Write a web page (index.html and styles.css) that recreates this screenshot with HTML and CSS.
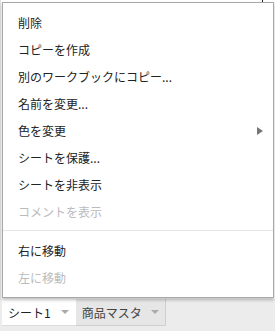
FILE: index.html
```html
<!DOCTYPE html>
<html lang="ja">
<head>
    <meta charset="UTF-8">
    <title>シートメニュー</title>
    <link rel="stylesheet" href="styles.css">
</head>
<body>
    <div class="sheet-area">
        <span class="col-mark"></span>
    </div>

    <div class="tab-bar">
        <div class="tab active">シート1 <span class="tab-arrow"></span></div>
        <div class="tab">商品マスタ <span class="tab-arrow"></span></div>
    </div>

    <!-- context menu for the sheet tab -->
    <div class="menu">
        <div class="menu-item">削除</div>
        <div class="menu-item">コピーを作成</div>
        <div class="menu-item">別のワークブックにコピー...</div>
        <div class="menu-item">名前を変更...</div>
        <div class="menu-item has-sub">色を変更 <span class="sub-arrow"></span></div>
        <div class="menu-item">シートを保護...</div>
        <div class="menu-item">シートを非表示</div>
        <div class="menu-item disabled">コメントを表示</div>
        <div class="menu-sep"></div>
        <div class="menu-item">右に移動</div>
        <div class="menu-item disabled">左に移動</div>
    </div>
</body>
</html>
```

FILE: styles.css
```css
body {
    margin: 0;
    width: 275px;
    height: 331px;
    overflow: hidden;
    position: relative;
    background: #fff;
    font-family: "Noto Sans CJK JP", "Noto Sans", sans-serif;
    font-size: 12px;
    color: #222;
}

.sheet-area {
    height: 299px;
    border-left: 1px solid #e0e0e0;
    position: relative;
}

.col-mark {
    position: absolute;
    left: 261px;
    top: 0;
    width: 1px;
    height: 3px;
    background: #222;
}

.tab-bar {
    display: flex;
    height: 32px;
    background: #ececec;
    padding-left: 2px;
}

.tab {
    display: flex;
    align-items: center;
    gap: 9px;
    height: 26px;
    padding: 0 6px;
    background: #e6e6e6;
    border-right: 1px solid #cfcfcf;
    border-bottom: 1px solid #cfcfcf;
    color: #444;
}

.tab.active {
    background: #fff;
    color: #222;
    border-bottom-color: #ddd;
    border-right: none;
    gap: 10px;
    padding-right: 7px;
}

.tab-arrow {
    width: 0;
    height: 0;
    border-left: 4px solid transparent;
    border-right: 4px solid transparent;
    border-top: 4px solid #aaa;
}

.menu {
    position: absolute;
    left: 2px;
    top: 2px;
    width: 270px;
    padding: 6px 0;
    background: #fff;
    border: 1px solid #a8a8a8;
    box-shadow: 0 2px 3px rgba(0, 0, 0, 0.25);
}

.menu-item {
    display: flex;
    align-items: center;
    height: 27px;
    padding-left: 15px;
    line-height: 27px;
}

.menu-item.disabled {
    color: #bbb;
}

.has-sub {
    justify-content: space-between;
    padding-right: 10px;
}

.sub-arrow {
    width: 0;
    height: 0;
    border-top: 4px solid transparent;
    border-bottom: 4px solid transparent;
    border-left: 6px solid #777;
}

.menu-sep {
    height: 1px;
    background: #e6e6e6;
    margin: 5px 0 6px;
}
```
